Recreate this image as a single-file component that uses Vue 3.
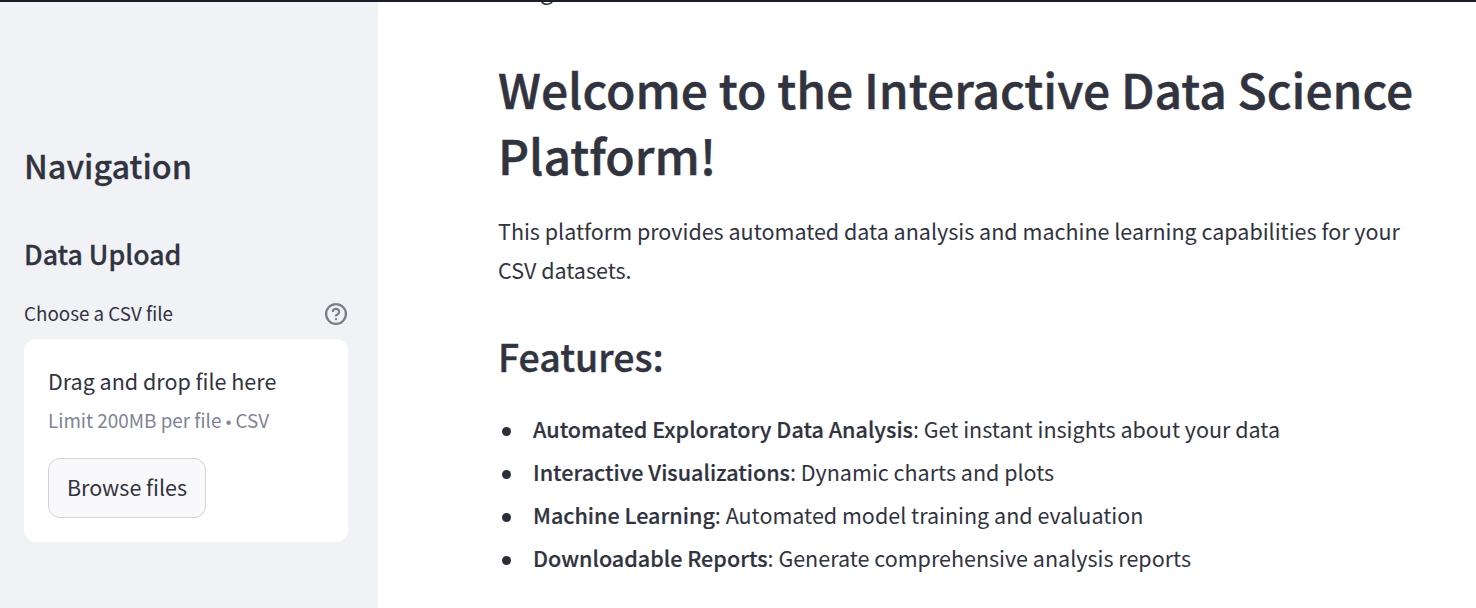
<template>
  <div class="page">
    <aside class="sidebar">
      <h2 class="nav-title">Navigation</h2>
      <h3 class="upload-title">Data Upload</h3>
      <div class="label-row">
        <span>Choose a CSV file</span>
        <svg class="help" width="24" height="24" viewBox="0 0 24 24" fill="none" stroke="currentColor" stroke-width="2.3">
          <circle cx="12" cy="12" r="9.9" />
          <path d="M8.8 9a3.3 3.3 0 0 1 6.4 1.1c0 2.2-3.2 3-3.2 3.4" stroke-linecap="round" stroke-linejoin="round" />
          <path d="M12 17.2h.01" stroke-linecap="round" />
        </svg>
      </div>
      <div class="dropzone">
        <div class="drop-text">Drag and drop file here</div>
        <div class="drop-limit">Limit 200MB per file <span class="dot">•</span> CSV</div>
        <button class="browse">Browse files</button>
      </div>
    </aside>
    <main class="main">
      <div class="clipped">Usage</div>
      <h1>Welcome to the Interactive Data Science Platform!</h1>
      <p class="intro">This platform provides automated data analysis and machine learning capabilities for your CSV datasets.</p>
      <h2 class="features">Features:</h2>
      <ul>
        <li v-for="f in features" :key="f.name"><strong>{{ f.name }}</strong>: {{ f.text }}</li>
      </ul>
    </main>
  </div>
</template>

<script setup>
const features = [
  { name: 'Automated Exploratory Data Analysis', text: 'Get instant insights about your data' },
  { name: 'Interactive Visualizations', text: 'Dynamic charts and plots' },
  { name: 'Machine Learning', text: 'Automated model training and evaluation' },
  { name: 'Downloadable Reports', text: 'Generate comprehensive analysis reports' }
]
</script>

<style>
html, body {
  margin: 0;
  overflow: hidden;
}
</style>

<style scoped>
.page {
  display: flex;
  height: 606px;
  border-top: 2px solid #1b1d29;
  overflow: hidden;
  font-family: "Noto Sans CJK SC", "Noto Sans", sans-serif;
  color: #31333f;
  background: #fff;
}

.sidebar {
  width: 378px;
  flex-shrink: 0;
  box-sizing: border-box;
  padding: 141px 30px 0 24px;
  background: #f0f2f6;
}

.nav-title {
  margin: 0;
  font-size: 32.4px;
  line-height: 44px;
  font-weight: 500;
  -webkit-text-stroke: 0.3px currentColor;
}

.upload-title {
  margin: 49px 0 0;
  font-size: 26.7px;
  line-height: 36px;
  font-weight: 500;
  -webkit-text-stroke: 0.3px currentColor;
}

.label-row {
  display: flex;
  justify-content: space-between;
  align-items: flex-start;
  margin-top: 26px;
  height: 28px;
  font-size: 18.8px;
  line-height: 30px;
}

.help {
  margin-top: 4px;
  color: #7b7d88;
}

.dropzone {
  margin-top: 13px;
  height: 203px;
  box-sizing: border-box;
  padding: 23px 24px 24px;
  background: #fff;
  border-radius: 12px;
}

.drop-text {
  font-size: 21.5px;
  line-height: 38px;
}

.drop-limit {
  margin-top: 4px;
  font-size: 18.85px;
  line-height: 32px;
  color: #808495;
}

.dot {
  font-family: "Liberation Sans", sans-serif;
  font-size: 16px;
}

.browse {
  display: block;
  margin-top: 19px;
  width: 158px;
  height: 60px;
  padding: 0 0 4px;
  border: 1px solid #d2d3d8;
  border-radius: 12px;
  background: #f9f9fb;
  color: #31333f;
  font: inherit;
  font-size: 21.5px;
}

.main {
  flex: 1;
  min-width: 0;
  padding: 0 60px 0 120px;
  overflow: hidden;
}

.clipped {
  margin-top: -32px;
  font-size: 24px;
  line-height: 38px;
}

h1 {
  margin: 47px 0 0;
  font-size: 48px;
  line-height: 66px;
  font-weight: 500;
  -webkit-text-stroke: 0.5px currentColor;
}

.intro {
  margin: 24px 0 0;
  font-size: 21.5px;
  line-height: 39px;
}

.features {
  margin: 40px 0 0;
  font-size: 37.5px;
  line-height: 54px;
  font-weight: 500;
  -webkit-text-stroke: 0.4px currentColor;
}

ul {
  margin: 26px 0 0;
  padding-left: 35px;
  list-style: none;
  font-size: 21.5px;
  line-height: 39px;
}

li {
  margin-bottom: 4px;
}

li::before {
  content: "";
  display: inline-block;
  width: 9px;
  height: 9px;
  margin-left: -31px;
  margin-right: 22px;
  border-radius: 50%;
  background: #2b2d38;
  vertical-align: 2px;
}

strong {
  font-size: 21.55px;
  font-weight: 500;
  -webkit-text-stroke: 0.2px currentColor;
}
</style>
